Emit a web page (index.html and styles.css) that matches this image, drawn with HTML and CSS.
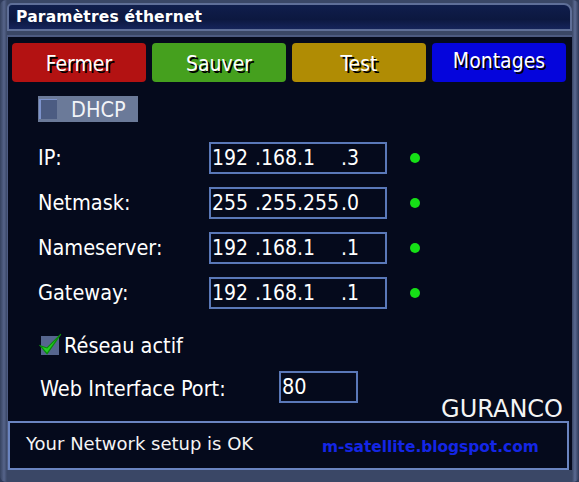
FILE: index.html
```html
<!DOCTYPE html>
<html lang="fr">
<head>
<meta charset="utf-8">
<title>Paramètres éthernet</title>
<link rel="stylesheet" href="styles.css">
</head>
<body>
<div class="frame">
  <div class="titlebar"><span class="title">Paramètres éthernet</span></div>
  <div class="panel">
    <div class="buttons">
      <div class="btn red">Fermer</div>
      <div class="btn green">Sauver</div>
      <div class="btn gold">Test</div>
      <div class="btn blue raised">Montages</div>
    </div>
    <div class="dhcp"><span class="box"></span><span class="dhcp-label">DHCP</span></div>
    <div class="fields">
      <div class="label">IP:</div>
      <div class="ipbox"><span>192</span><span>.168</span><span>.1</span><span>.3</span></div>
      <div class="dot"></div>
      <div class="label">Netmask:</div>
      <div class="ipbox"><span>255</span><span>.255</span><span>.255</span><span>.0</span></div>
      <div class="dot"></div>
      <div class="label">Nameserver:</div>
      <div class="ipbox"><span>192</span><span>.168</span><span>.1</span><span>.1</span></div>
      <div class="dot"></div>
      <div class="label">Gateway:</div>
      <div class="ipbox"><span>192</span><span>.168</span><span>.1</span><span>.1</span></div>
      <div class="dot"></div>
    </div>
    <div class="active">
      <span class="box checked">
        <svg viewBox="0 0 20 20" width="23" height="23"><path d="M1 11 L7 18 L19 1 L7 13 Z" fill="#22d022" stroke="#0a8a0a" stroke-width="1"/></svg>
      </span>
      <span class="active-label">Réseau actif</span>
    </div>
    <div class="port">
      <span class="port-label">Web Interface Port:</span>
      <span class="portbox">80</span>
    </div>
    <div class="brand">GURANCO</div>
    <div class="status">
      <span class="status-text">Your Network setup is OK</span>
      <span class="blog">m-satellite.blogspot.com</span>
    </div>
  </div>
</div>
</body>
</html>
```
FILE: styles.css
```css
html, body {
  margin: 0;
  padding: 0;
  background: #2f3b5a;
}
.frame {
  box-sizing: border-box;
  width: 579px;
  height: 482px;
  padding: 3px 7px 12px 7px;
  background: linear-gradient(90deg, #35425f 0, #56648a 4px, #3a4766 7px, #3a4766 572px, #5b6a92 575px, #2d3856 579px);
  display: flex;
  flex-direction: column;
  border-radius: 6px;
  overflow: hidden;
}
.titlebar {
  box-sizing: border-box;
  flex: 0 0 28px;
  height: 28px;
  border: 2px solid #5f6f98;
  border-radius: 5px 8px 0 0;
  background: linear-gradient(180deg, #101e4c 0%, #0c1840 60%, #15245a 100%);
  padding-left: 7px;
  display: flex;
  align-items: center;
}
.title {
  font-family: "DejaVu Sans", sans-serif;
  font-weight: bold;
  font-size: 15.5px;
  color: #ffffff;
  letter-spacing: 0.2px;
}
.panel {
  margin-top: 4px;
  flex: 1 1 auto;
  min-height: 0;
  background: #050a1c;
  border-top: 2px solid #4d5b82;
  border-left: 1px solid #4d5b82;
  display: flex;
  flex-direction: column;
  font-family: "DejaVu Sans Condensed", "DejaVu Sans", sans-serif;
  font-stretch: condensed;
  color: #ffffff;
}
.panel > * { flex-shrink: 0; }
.buttons {
  display: flex;
  gap: 6px;
  margin: 6px 0 0 4px;
}
.btn {
  box-sizing: border-box;
  width: 134px;
  height: 39px;
  border-radius: 4px;
  display: flex;
  align-items: center;
  justify-content: center;
  font-size: 21px;
  padding-top: 2px;
  color: #ffffff;
  text-shadow: 2px 2px 0 #000000;
}
.btn.raised { padding-top: 0; padding-bottom: 4px; }
.red { background: #b31212; }
.green { background: #45a01e; }
.gold { background: #b08c04; }
.blue { background: #0505dc; }
.dhcp {
  margin: 14px 0 0 30px;
  width: 100px;
  height: 26px;
  background: #6b7a99;
  display: flex;
  align-items: center;
}
.box {
  box-sizing: border-box;
  width: 18px;
  height: 20px;
  background: #4c5c82;
  border-left: 2px solid #7d93cc;
  border-top: 1px solid #7d93cc;
  margin-left: 1px;
  position: relative;
}
.dhcp-label {
  margin-left: 14px;
  font-size: 21.5px;
  color: #f2f4f8;
}
.fields {
  margin: 20px 0 0 30px;
  display: grid;
  grid-template-columns: 171px 178px 30px;
  row-gap: 13px;
  align-items: center;
}
.label {
  font-size: 21.5px;
  line-height: 32px;
  padding-bottom: 6px;
  box-sizing: border-box;
  height: 32px;
}
.ipbox {
  box-sizing: border-box;
  height: 32px;
  border: 2px solid #5a78b8;
  display: grid;
  grid-template-columns: 43px 42px 44px 40px;
  align-items: center;
  padding-left: 1px;
  font-size: 21px;
  line-height: 28px;
}
.dot {
  width: 10px;
  height: 10px;
  border-radius: 50%;
  background: #16e016;
  margin-left: 23px;
}
.active {
  margin: 26px 0 0 32px;
  display: flex;
  align-items: center;
  height: 20px;
}
.box.checked {
  background: #56668e;
  border: none;
  width: 18px;
  height: 19px;
}
.box.checked svg {
  position: absolute;
  left: -2px;
  top: -3px;
}
.active-label {
  margin-left: 5px;
  font-size: 21.5px;
}
.port {
  margin: 16px 0 0 32px;
  display: flex;
  align-items: center;
}
.port-label {
  width: 239px;
  font-size: 21.5px;
  padding-top: 2px;
}
.portbox {
  box-sizing: border-box;
  width: 79px;
  height: 32px;
  border: 2px solid #5a78b8;
  font-size: 21.5px;
  line-height: 28px;
  padding-left: 1px;
}
.brand {
  align-self: flex-end;
  margin: -7px 9px 0 0;
  font-family: "DejaVu Sans", sans-serif;
  font-stretch: normal;
  font-size: 24px;
  line-height: 27px;
  color: #f4f4f4;
}
.status {
  box-sizing: border-box;
  margin: -2px 3px 0 0;
  height: 49px;
  border: 2px solid #6a84c0;
  display: flex;
  align-items: center;
  padding-left: 16px;
}
.status-text {
  width: 296px;
  font-family: "DejaVu Sans", sans-serif;
  font-stretch: normal;
  font-size: 18px;
  color: #f4f4f4;
  margin-top: -5px;
}
.blog {
  font-family: "DejaVu Sans", sans-serif;
  font-stretch: normal;
  font-weight: bold;
  font-size: 15.4px;
  color: #1426e6;
  margin-top: 3px;
}
```
